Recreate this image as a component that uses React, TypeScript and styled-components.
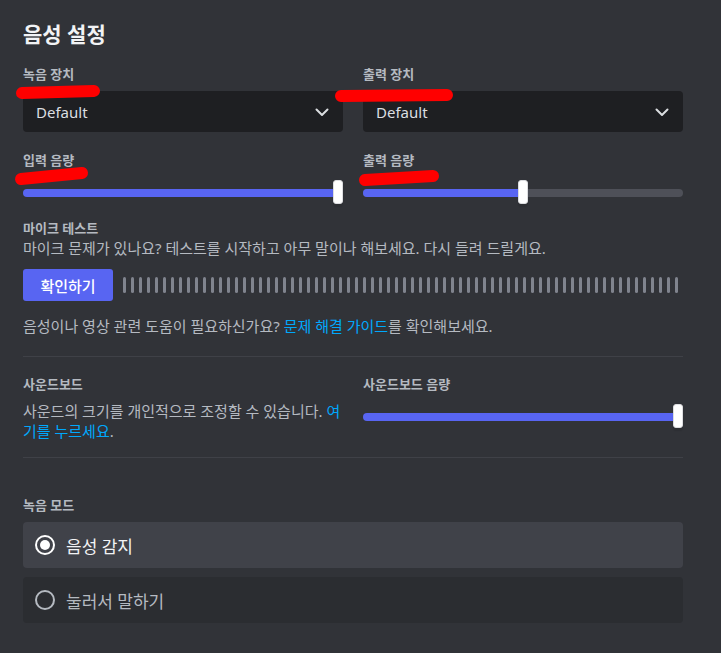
import React from 'react'
import styled, { createGlobalStyle } from 'styled-components'

const GlobalStyle = createGlobalStyle`
  html, body {
    margin: 0;
    background: #313338;
  }
  body {
    font-family: "Noto Sans", "Noto Sans CJK KR", sans-serif;
    color: #b5bac1;
  }
`

const Page = styled.div`
  position: relative;
  width: 721px;
  min-height: 653px;
  box-sizing: border-box;
  padding: 22px 0 0 23px;
`

const Content = styled.div`
  width: 660px;
`

const Title = styled.h1`
  margin: 0 0 20px;
  font-size: 21px;
  line-height: 24px;
  font-weight: 700;
  color: #f2f3f5;
`

const Columns = styled.div`
  display: grid;
  grid-template-columns: 320px 320px;
  column-gap: 20px;
  row-gap: 20px;
`

const Label = styled.div<{ gap?: number }>`
  font-size: 13px;
  line-height: 16px;
  font-weight: 700;
  color: #b5bac1;
  margin-bottom: ${p => p.gap ?? 9}px;
`

const Select = styled.div`
  display: flex;
  align-items: center;
  justify-content: space-between;
  height: 41px;
  box-sizing: border-box;
  padding: 0 9px 0 13px;
  background: #1e1f22;
  border-radius: 4px;
  font-size: 15px;
  color: #dbdee1;
`

const SliderBox = styled.div`
  position: relative;
  height: 24px;
  margin-top: 12px;
`

const Track = styled.div`
  position: relative;
  top: 9px;
  height: 8px;
  border-radius: 4px;
  background: #4e5058;
  overflow: hidden;
`

const Fill = styled.div`
  height: 100%;
  background: #5865f2;
`

const Thumb = styled.div`
  position: absolute;
  top: 0;
  width: 10px;
  height: 24px;
  box-sizing: border-box;
  border-radius: 3px;
  background: #ffffff;
  border: 1px solid #dcdde0;
  box-shadow: 0 3px 1px rgba(0, 0, 0, 0.08);
`

const Section = styled.div<{ top: number }>`
  margin-top: ${p => p.top}px;
`

const Text = styled.div<{ top?: number }>`
  margin-top: ${p => p.top ?? 0}px;
  font-size: 15px;
  line-height: 20px;
  color: #b5bac1;
  word-break: break-all;
`

const Link = styled.a`
  color: #00a8fc;
  text-decoration: none;
`

const TestRow = styled.div`
  display: flex;
  align-items: center;
  margin-top: 11px;
`

const Button = styled.button`
  width: 90px;
  height: 32px;
  border: none;
  border-radius: 3px;
  background: #5865f2;
  color: #ffffff;
  font-family: inherit;
  font-size: 15px;
  font-weight: 500;
  margin-right: 10px;
  padding: 0;
`

const Meter = styled.div`
  display: flex;
  gap: 5px;
`

const Bar = styled.div`
  width: 3px;
  height: 16px;
  border-radius: 2px;
  background: #80848e;
`

const Divider = styled.div<{ top: number; bottom: number }>`
  height: 1px;
  background: #3f4147;
  margin: ${p => p.top}px 0 ${p => p.bottom}px;
`

const Options = styled.div`
  display: flex;
  flex-direction: column;
  gap: 9px;
`

const Option = styled.div<{ selected?: boolean }>`
  display: flex;
  align-items: center;
  gap: 11px;
  height: 46px;
  padding: 0 12px;
  border-radius: 4px;
  background: ${p => (p.selected ? '#404249' : '#2b2d31')};
  color: ${p => (p.selected ? '#f2f3f5' : '#b5bac1')};
  font-size: 17px;
`

const Radio = styled.div<{ selected?: boolean }>`
  display: flex;
  align-items: center;
  justify-content: center;
  width: 20px;
  height: 20px;
  box-sizing: border-box;
  border-radius: 50%;
  border: 2px solid ${p => (p.selected ? '#ffffff' : '#b5bac1')};

  &::after {
    content: '';
    display: ${p => (p.selected ? 'block' : 'none')};
    width: 10px;
    height: 10px;
    border-radius: 50%;
    background: #ffffff;
  }
`

const Marks = styled.svg`
  position: absolute;
  top: 0;
  left: 0;
  pointer-events: none;
`

function Chevron() {
  return (
    <svg width="24" height="24" viewBox="0 0 24 24" fill="none">
      <path d="M6.5 9.5l5.5 5.5 5.5-5.5" stroke="#dbdee1" strokeWidth="2" strokeLinecap="round" strokeLinejoin="round" />
    </svg>
  )
}

function Slider({ value }: { value: number }) {
  return (
    <SliderBox>
      <Track>
        <Fill style={{ width: `${value * 100}%` }} />
      </Track>
      <Thumb style={{ left: `calc((100% - 10px) * ${value})` }} />
    </SliderBox>
  )
}

export default function App() {
  return (
    <Page>
      <GlobalStyle />
      <Content>
        <Title>음성 설정</Title>
        <Columns>
          <div>
            <Label>녹음 장치</Label>
            <Select>Default<Chevron /></Select>
          </div>
          <div>
            <Label>출력 장치</Label>
            <Select>Default<Chevron /></Select>
          </div>
          <div>
            <Label gap={0}>입력 음량</Label>
            <Slider value={1} />
          </div>
          <div>
            <Label gap={0}>출력 음량</Label>
            <Slider value={0.5} />
          </div>
        </Columns>

        <Section top={16}>
          <Label gap={2}>마이크 테스트</Label>
          <Text>마이크 문제가 있나요? 테스트를 시작하고 아무 말이나 해보세요. 다시 들려 드릴게요.</Text>
          <TestRow>
            <Button>확인하기</Button>
            <Meter>
              {Array.from({ length: 70 }, (_, i) => <Bar key={i} />)}
            </Meter>
          </TestRow>
          <Text top={15}>
            음성이나 영상 관련 도움이 필요하신가요? <Link>문제 해결 가이드</Link>를 확인해보세요.
          </Text>
        </Section>

        <Divider top={20} bottom={19} />

        <Columns>
          <div>
            <Label>사운드보드</Label>
            <Text>사운드의 크기를 개인적으로 조정할 수 있습니다. <Link>여기를 누르세요</Link>.</Text>
          </div>
          <div>
            <Label gap={0}>사운드보드 음량</Label>
            <Slider value={1} />
          </div>
        </Columns>

        <Divider top={16} bottom={39} />

        <Label>녹음 모드</Label>
        <Options>
          <Option selected><Radio selected />음성 감지</Option>
          <Option><Radio />눌러서 말하기</Option>
        </Options>
      </Content>

      <Marks width="721" height="653" viewBox="0 0 721 653">
        <g stroke="#ff0000" strokeWidth="12" strokeLinecap="round">
          <line x1="22" y1="93" x2="94" y2="91" />
          <line x1="341" y1="96" x2="447" y2="95" />
          <line x1="21" y1="179" x2="82" y2="173" />
          <line x1="365" y1="180" x2="433" y2="176" />
        </g>
      </Marks>
    </Page>
  )
}
